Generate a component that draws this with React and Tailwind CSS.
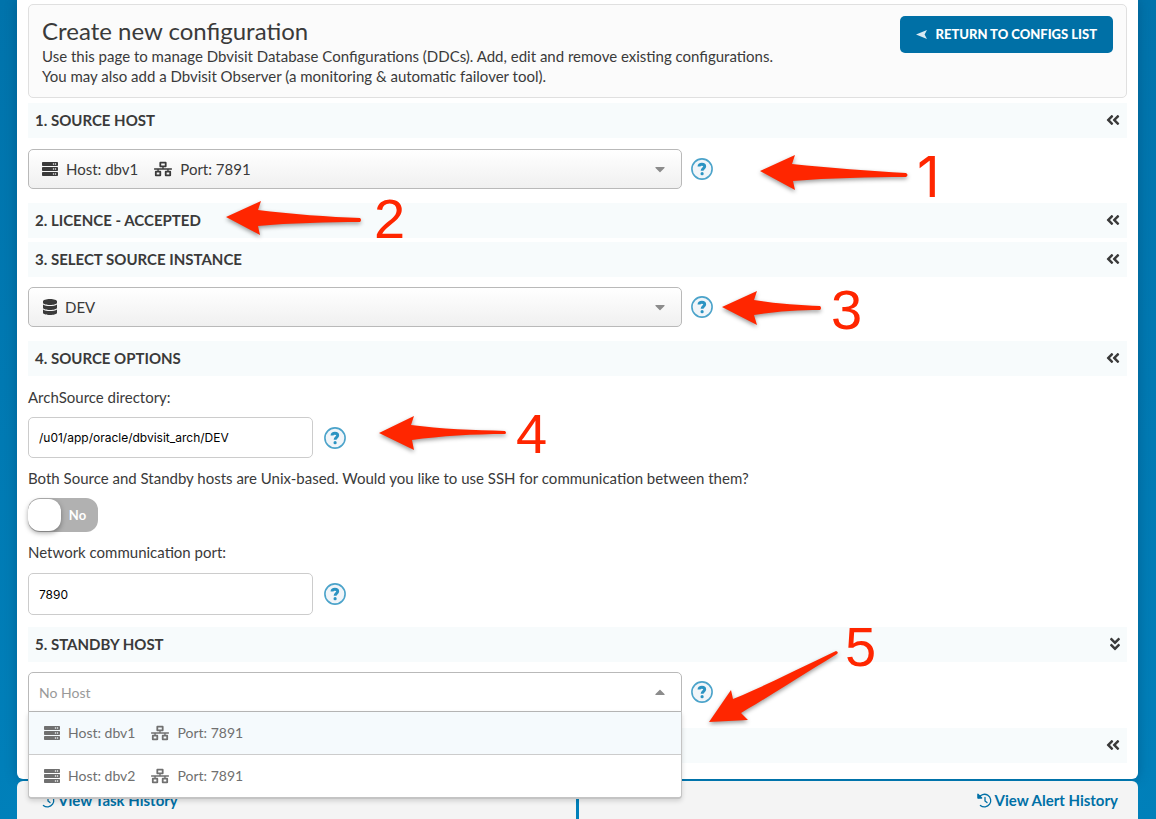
import { useState } from 'react';
import { FaServer, FaNetworkWired, FaDatabase, FaAngleDoubleLeft, FaAngleDoubleDown, FaCaretDown, FaCaretUp } from 'react-icons/fa';

const HOSTS = [
    { name: 'dbv1', port: 7891 },
    { name: 'dbv2', port: 7891 },
];

// callout arrows drawn over the page
const ARROWS = [
    'M760 171L795 155L792 164C830 168 870 171 906 173Q909 175 906 177C870 177 830 178 793 181L795 190Z',
    'M226 217L261 201L258 210C290 214 330 217 360 218Q362 220 360 222C330 222 290 223 258 226L260 235Z',
    'M722 307L757 291L754 300C780 304 800 305 820 306Q822 308 820 310C800 310 780 311 754 315L757 325Z',
    'M379 433L414 416L411 425C440 429 475 430 505 431Q507 433 505 434C475 434 440 436 412 440L414 450Z',
    'M709 722L731 690L733 699C765 686 800 668 836 651Q839 652 837 654C804 674 770 696 741 713L748 720Z',
];

const HelpButton = ({ topic }) => (
    <button type="button" aria-label={`Help: ${topic}`} className="shrink-0">
        <svg width="22" height="22" viewBox="0 0 22 22" fill="none">
            <circle cx="11" cy="11" r="10.1" fill="#f1f5f9" stroke="#4ba3ca" strokeWidth="1.6" />
            <path d="M8 8.5C8.1 6.9 9.4 6.3 10.9 6.3C12.7 6.3 13.7 7.2 13.7 8.4C13.7 10.3 11.1 10.4 11.1 12.8" stroke="#2b93c2" strokeWidth="2.9" />
            <circle cx="11.1" cy="15.7" r="1.6" fill="#2b93c2" />
        </svg>
    </button>
);

const HistoryIcon = () => (
    <svg width="15" height="15" viewBox="0 0 15 15" fill="none" stroke="currentColor" strokeWidth="1.3" strokeLinecap="round" strokeLinejoin="round">
        <path d="M1.8 4.8A6.3 6.3 0 1 1 3.4 12.4" />
        <path d="M0.9 1.2V5H4.7Z" fill="currentColor" />
        <path d="M8 4.4V8L10 9.6" />
    </svg>
);

const SectionBar = ({ title, open }) => (
    <button type="button" aria-expanded={!!open} aria-label={title ? undefined : 'Expand section'} className="flex h-[35px] w-full items-center justify-between bg-[#f7fbfc] pr-[6px] pb-[2px] pl-[7px] text-left">
        <span className="text-[15px] leading-6 font-bold">{title}</span>
        {open ? <FaAngleDoubleDown size={16} className="-mr-0.5" /> : <FaAngleDoubleLeft size={16} />}
    </button>
);

const HostLabel = ({ host }) => (
    <span className="flex items-center gap-2">
        <FaServer size={16} />
        <span>Host: {host.name}</span>
        <FaNetworkWired size={18} className="ml-2" />
        <span>Port: {host.port}</span>
    </span>
);

// native select on top, its styled value underneath
const SelectBox = ({ id, label, options, value, onChange, children }) => (
    <div className="grid h-10 w-full max-w-[654px]">
        <div aria-hidden="true" className="col-start-1 row-start-1 flex items-center justify-between rounded-[5px] border border-[#b9b9b9] bg-linear-to-b from-white to-[#f0f0f0] px-[13px] text-[15px] leading-6">
            {children}
            <FaCaretDown size={16} className="text-[#8c8c8c]" />
        </div>
        <select id={id} aria-label={label} value={value} onChange={e => onChange(e.target.value)} className="col-start-1 row-start-1 w-full cursor-pointer opacity-0">
            {options.map(o => <option key={o} value={o}>{o}</option>)}
        </select>
    </div>
);

const App = () => {
    const [sourceHost, setSourceHost] = useState('dbv1');
    const [instance, setInstance] = useState('DEV');
    const [archDir, setArchDir] = useState('/u01/app/oracle/dbvisit_arch/DEV');
    const [useSsh, setUseSsh] = useState(false);
    const [port, setPort] = useState('7890');
    const [standby, setStandby] = useState('');

    return (
        <div className="relative flex min-h-screen flex-col gap-[2px] overflow-hidden bg-linear-to-b from-[#0073ab] to-[#0080ba] pl-[17px] pr-[18px] font-[Lato,sans-serif] text-[#3a3a3a]">
            <main className="rounded-b-md bg-white px-[11px] pt-1 pb-4 shadow-[0_0_12px_rgba(0,60,100,0.4)]">
                {/* Header */}
                <header className="mb-[5px] flex items-start justify-between rounded-[5px] border border-[#e0e0e0] bg-[#fbfbfb] px-[13px] pt-[11px] pb-[11px]">
                    <div>
                        <h1 className="text-[24px] leading-[30px]">Create new configuration</h1>
                        <p className="text-[15px] leading-5">
                            Use this page to manage Dbvisit Database Configurations (DDCs). Add, edit and remove existing configurations.
                            <br />
                            You may also add a Dbvisit Observer (a monitoring &amp; automatic failover tool).
                        </p>
                    </div>
                    <button type="button" className="flex h-[37px] items-center gap-2 rounded-[5px] bg-[#0070a6] px-4 text-[13px] font-black whitespace-nowrap text-white">
                        <svg width="11" height="9" viewBox="0 0 11 9" fill="#d9e9f2"><path d="M0 4.5L11 0L8.6 4.5L11 9Z" /></svg>
                        RETURN TO CONFIGS LIST
                    </button>
                </header>

                <SectionBar title="1. SOURCE HOST" />
                <div className="flex items-center gap-[9px] pt-[11px] pb-[14px]">
                    <SelectBox id="source-host" label="Source host" options={HOSTS.map(h => h.name)} value={sourceHost} onChange={setSourceHost}>
                        <HostLabel host={HOSTS.find(h => h.name === sourceHost)} />
                    </SelectBox>
                    <HelpButton topic="source host" />
                </div>

                <SectionBar title="2. LICENCE - ACCEPTED" />
                <div className="h-1" />

                <SectionBar title="3. SELECT SOURCE INSTANCE" />
                <div className="flex items-center gap-[9px] pt-[10px] pb-[14px]">
                    <SelectBox id="instance" label="Source instance" options={['DEV']} value={instance} onChange={setInstance}>
                        <span className="flex items-center gap-[7px]">
                            <FaDatabase size={16} />
                            {instance}
                        </span>
                    </SelectBox>
                    <HelpButton topic="source instance" />
                </div>

                <SectionBar title="4. SOURCE OPTIONS" />
                <div className="flex flex-col gap-2 pt-[9px] pb-3 text-[15px] leading-6">
                    <label htmlFor="arch-dir">ArchSource directory:</label>
                    <div className="flex items-center gap-[11px]">
                        <input id="arch-dir" type="text" value={archDir} onChange={e => setArchDir(e.target.value)} className="h-[41px] w-full max-w-[285px] rounded-[5px] border border-[#cccccc] bg-white px-[10px] font-[Inter,sans-serif] text-[12px] text-black" />
                        <HelpButton topic="ArchSource directory" />
                    </div>
                    <label htmlFor="use-ssh">Both Source and Standby hosts are Unix-based. Would you like to use SSH for communication between them?</label>
                    <label className="flex h-[34px] w-[70px] cursor-pointer items-center rounded-xl bg-[#b1b1b1] has-checked:flex-row-reverse has-checked:bg-[#0070a6]">
                        <input id="use-ssh" type="checkbox" role="switch" checked={useSsh} onChange={e => setUseSsh(e.target.checked)} className="h-8 w-[33px] appearance-none rounded-xl bg-white shadow-[0_2px_5px_rgba(0,0,0,0.35)]" />
                        <span className="flex-1 pr-1 text-center text-[13px] font-bold text-white">{useSsh ? 'Yes' : 'No'}</span>
                    </label>
                    <label htmlFor="net-port">Network communication port:</label>
                    <div className="flex items-center gap-[11px] pt-px">
                        <input id="net-port" type="text" value={port} onChange={e => setPort(e.target.value)} className="h-[42px] w-full max-w-[285px] rounded-[5px] border border-[#cccccc] bg-white px-[10px] font-[Inter,sans-serif] text-[12px] text-black" />
                        <HelpButton topic="network communication port" />
                    </div>
                </div>

                <SectionBar title="5. STANDBY HOST" open />
                <div className="flex items-center gap-[9px] pt-[10px] pb-4">
                    <div className="relative w-full max-w-[654px]">
                        <div className="flex h-10 items-center rounded-t-[5px] border border-[#b9b9b9] bg-white pr-[13px]">
                            <input type="text" role="combobox" aria-label="Standby host" aria-expanded="true" aria-controls="standby-list" placeholder="No Host" value={standby} onChange={e => setStandby(e.target.value)} className="h-full min-w-0 flex-1 px-[10px] text-[14px] outline-none placeholder:text-[#999999]" />
                            <FaCaretUp size={16} className="text-[#8c8c8c]" />
                        </div>
                        <ul id="standby-list" role="listbox" className="absolute inset-x-0 top-full z-10 rounded-b-[4px] border border-t-0 border-b-2 border-[#c4c4c4] bg-white text-[14px] leading-5 text-[#707070] shadow-[0_2px_5px_rgba(0,0,0,0.15)]">
                            {HOSTS.map((host, i) => (
                                <li key={host.name} role="option" aria-selected={i === 0} className="flex h-[42px] items-center px-[15px] not-last:h-[43px] not-last:border-b not-last:border-[#cccccc] aria-selected:bg-[#f5fafd]">
                                    <HostLabel host={host} />
                                </li>
                            ))}
                        </ul>
                    </div>
                    <HelpButton topic="standby host" />
                </div>

                <SectionBar />
            </main>

            {/* History links */}
            <footer className="grid flex-1 grid-cols-2 gap-[3px] text-[15px] leading-6 font-bold text-[#0070a6]">
                <div className="rounded-tl-md bg-[#f4f4f4] px-[23px] pt-[7px] pb-[7px]">
                    <a href="#tasks" className="inline-flex items-center gap-[3px]"><HistoryIcon /> View Task History</a>
                </div>
                <div className="rounded-tr-md bg-[#f4f4f4] px-5 pt-[7px] pb-[7px] text-right">
                    <a href="#alerts" className="inline-flex items-center gap-[3px]"><HistoryIcon /> View Alert History</a>
                </div>
            </footer>

            {/* Callouts */}
            <svg width="1156" height="819" viewBox="0 0 1156 819" className="pointer-events-none absolute top-0 left-0 z-20 fill-[#ff2600] drop-shadow-[0_2px_2px_rgba(0,0,0,0.4)]">
                {ARROWS.map(d => <path key={d} d={d} />)}
            </svg>
            <div className="pointer-events-none absolute top-0 left-0 z-20 font-[Liberation_Sans,Arial,sans-serif] text-[56px] leading-[56px] text-[#ff2600]">
                <span className="absolute top-[149px] left-[917px] font-[Inter,sans-serif]">1</span>
                <span className="absolute top-[191px] left-[374px]">2</span>
                <span className="absolute top-[282px] left-[831px]">3</span>
                <span className="absolute top-[406px] left-[516px]">4</span>
                <span className="absolute top-[619px] left-[845px]">5</span>
            </div>
        </div>
    );
};

export default App;
